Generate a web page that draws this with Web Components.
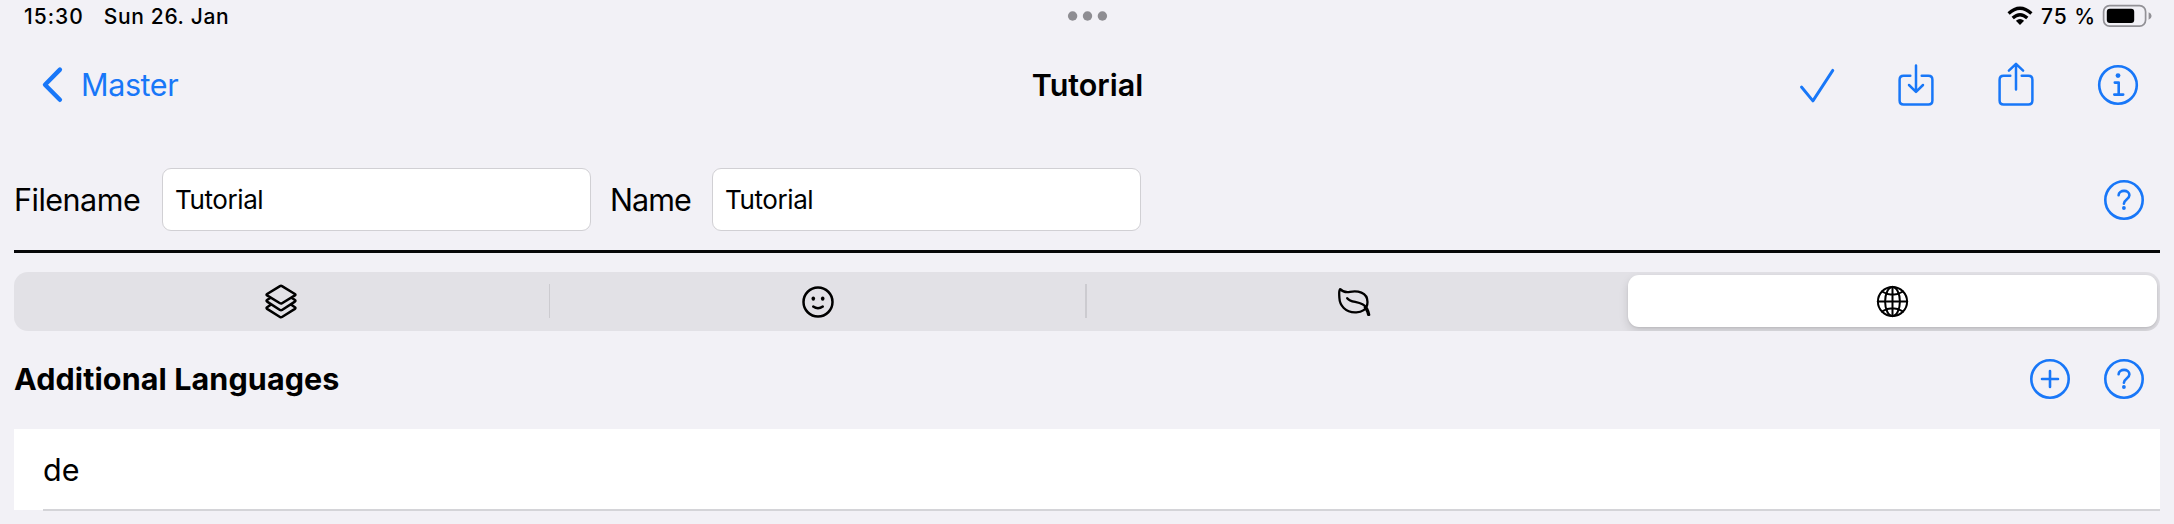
<!DOCTYPE html>
<html lang="en">
<head>
<meta charset="utf-8">
<title>Tutorial</title>
<style>
html,body{margin:0;height:100%}
body{background:#f2f1f6;font-family:Inter,"Liberation Sans",sans-serif;color:#000;overflow:hidden}
</style>
</head>
<body>
<tutorial-page></tutorial-page>
<script>
const define = (name, html) => {
  const t = document.createElement('template');
  t.innerHTML = html;
  customElements.define(name, class extends HTMLElement {
    constructor() {
      super();
      this.attachShadow({mode: 'open'}).append(t.content.cloneNode(true));
    }
  });
};

const stroke = (w, d) => `<g fill="none" stroke="currentColor" stroke-width="${w}" stroke-linecap="round" stroke-linejoin="round">${d}</g>`;
const icons = {
  back: [20, 36, stroke(4.4, '<path d="M18.9 2.6 4 17.8 18.9 32.8"/>')],
  check: [40, 44, stroke(2.9, '<path d="M5.5 24 16.9 37.9 36.8 7.4"/>')],
  download: [40, 44, stroke(2.5, '<path d="M14.3 12.7H7.6Q3.6 12.7 3.6 16.7V37.5Q3.6 41.5 7.6 41.5H32.4Q36.4 41.5 36.4 37.5V16.7Q36.4 12.7 32.4 12.7H25.7M20 2.6V28.6M13 22 20 28.9 27 22"/>')],
  share: [40, 44, stroke(2.5, '<path d="M14.3 12.7H7.6Q3.6 12.7 3.6 16.7V37.5Q3.6 41.5 7.6 41.5H32.4Q36.4 41.5 36.4 37.5V16.7Q36.4 12.7 32.4 12.7H25.7M20 26.6V.9M12.9 7.7 20 .9 27.1 7.7"/>')],
  info: [42, 42, stroke(2.6, '<circle cx="21" cy="21" r="18.8"/><path d="M17.8 18.6H21.7V30.5M17.3 30.6H26.2"/>') + '<circle cx="21" cy="11.6" r="2.4" fill="currentColor"/>'],
  plus: [42, 42, stroke(2.6, '<circle cx="21" cy="21" r="18.7"/><path d="M21 13V29M13 21H29"/>')],
  help: [42, 42, stroke(2.6, '<circle cx="21" cy="21" r="18.7"/><path d="M15.6 16.2C15.8 10.4 26.4 10.4 26.4 16.3 26.4 20.5 20.9 20.6 20.9 24.8"/>') + '<circle cx="20.9" cy="29" r="1.9" fill="currentColor"/>'],
  layers: [36, 36, stroke(2.5, '<path d="M17 2.1Q18 1.5 19 2.1L31.9 10Q33 10.7 31.9 11.4L19 19.3Q18 19.9 17 19.3L4.1 11.4Q3 10.7 4.1 10ZM7 13.9 4.1 16Q3 16.8 4.1 17.6L17 26Q18 26.6 19 26L31.9 17.6Q33 16.8 31.9 16L29 13.9M7 21.3 4.1 23.3Q3 24.1 4.1 24.9L17 33Q18 33.6 19 33L31.9 24.9Q33 24.1 31.9 23.3L29 21.3"/>')],
  smile: [36, 36, stroke(2.5, '<circle cx="18" cy="18" r="14.5"/><path d="M13.2 22.6Q18 26 22.8 22.6"/>') + '<ellipse cx="13.3" cy="14.6" rx="1.8" ry="2.2" fill="currentColor"/><ellipse cx="22.7" cy="14.6" rx="1.8" ry="2.2" fill="currentColor"/>'],
  leaf: [36, 36, stroke(2.3, '<path d="M4.2 5.1C6 7 9.5 8.7 14 7.9 21 6.5 31.5 8 31.5 18 31.5 25.5 25.5 28.9 19 28.4 9.5 28.3 3.7 21.5 3.4 14 3.2 10 2.6 7 4.2 5.1Z"/><path d="M11.2 14.2C14.5 18.5 20.5 17.2 26.5 20.3 30.5 22.4 32.3 26 33.2 30.8L32.2 30.9C31.7 28 30.7 25.8 28.8 23.2"/>')],
  globe: [36, 36, stroke(2, '<circle cx="18.5" cy="18.5" r="14.6"/><ellipse cx="18.5" cy="18.5" rx="7.4" ry="14.6"/><path d="M18.5 3.8V33.2M3.8 18.5H33.2M7.9 8.5Q18.5 15 29.1 8.5M7.9 28.5Q18.5 22 29.1 28.5"/>')],
  wifi: [26, 20, '<g fill="none" stroke="currentColor" stroke-width="3.3"><path d="M1.6 7.5Q13-2.9 24.4 7.5M5.7 12Q13 5.3 20.3 12"/></g><path d="M13 19 8.9 14.7Q13 11.3 17.1 14.7Z" fill="currentColor"/>'],
  battery: [50, 24, '<rect x="1.6" y="1.7" width="42" height="20.4" rx="6" fill="none" stroke="#929196" stroke-width="1.7"/><rect x="4.8" y="4.8" width="27.4" height="14.3" rx="3" fill="currentColor"/><path d="M46.6 8.2Q49.6 9.4 49.6 12 49.6 14.6 46.6 15.8Z" fill="#929196"/>'],
  dots: [40, 10, '<g fill="#8e8d92"><circle cx="4.6" cy="5" r="4.7"/><circle cx="19.5" cy="5" r="4.7"/><circle cx="34.4" cy="5" r="4.7"/></g>']
};
customElements.define('ui-icon', class extends HTMLElement {
  connectedCallback() {
    const [w, h, art] = icons[this.getAttribute('name')];
    const root = this.shadowRoot || this.attachShadow({mode: 'open'});
    root.innerHTML = `<style>:host{display:block;flex:none;width:${w}px;height:${h}px}svg{display:block;overflow:visible}</style><svg width="${w}" height="${h}" viewBox="0 0 ${w} ${h}">${art}</svg>`;
  }
});

define('status-bar', `<style>
:host{display:grid;grid-template-columns:1fr auto 1fr;align-items:center;height:32px;padding:0 22px 0 24px;font-size:21px;font-weight:460;white-space:nowrap}
.l{display:flex;gap:20px}.time{letter-spacing:1px}.date{letter-spacing:.65px}
.r{display:flex;justify-content:flex-end;align-items:center}
.p{margin:0 6px 0 7.5px;letter-spacing:.95px}
</style><div class="l"><span class="time">15:30</span><span class="date">Sun 26. Jan</span></div><ui-icon name="dots"></ui-icon>
<div class="r"><ui-icon name="wifi"></ui-icon><span class="p">75 %</span><ui-icon name="battery"></ui-icon></div>`);

define('nav-bar', `<style>
:host{display:grid;grid-template-columns:1fr auto 1fr;align-items:center;height:106px;padding:0 36px 0 41px;font-size:30.5px;line-height:40px}
.back{display:flex;align-items:center;gap:20px;color:#1877f8;letter-spacing:-.4px}
.title{font-weight:600;margin-right:3px;margin-left:-1px}
.tools{display:flex;justify-content:flex-end;align-items:center;color:#1877f8}
.tools ui-icon{margin-left:60px}.tools ui-icon:last-child{margin-left:61px;margin-right:-1px}
</style><div class="back"><ui-icon name="back"></ui-icon><span>Master</span></div><div class="title"><slot></slot></div>
<div class="tools"><ui-icon name="check"></ui-icon><ui-icon name="download"></ui-icon><ui-icon name="share"></ui-icon><ui-icon name="info"></ui-icon></div>`);

define('text-field', `<style>
:host{display:flex;flex:none;align-items:center;font-size:30.5px}
.label{flex:none;width:var(--label);letter-spacing:var(--track)}
.box{box-sizing:border-box;width:429.5px;height:63px;border:1px solid #d1d0d4;border-radius:9px;background:#fff;display:flex;align-items:center;padding-left:12.5px;font-size:26px;letter-spacing:-.4px}
</style><span class="label"><slot name="label"></slot></span><div class="box"><slot></slot></div>`);

define('file-form', `<style>
:host{display:flex;align-items:center;box-sizing:border-box;height:115px;margin:0 14px;padding-top:10px;border-bottom:3px solid #060708}
.help{margin-left:auto;margin-right:15.5px;margin-top:1px;color:#1877f8}
.file{--label:147.5px;--track:-.5px}
.name{--label:101.5px;--track:-.9px;margin-left:19px}
</style><text-field class="file"><span slot="label">Filename</span>Tutorial</text-field><text-field class="name"><span slot="label">Name</span>Tutorial</text-field><ui-icon class="help" name="help"></ui-icon>`);

define('segment-item', `<style>
:host{position:relative;display:flex;align-items:center;justify-content:center;border-radius:11px;padding-right:2px}
:host([divided])::after{content:"";position:absolute;right:.5px;top:12px;width:1.5px;height:34px;background:#cccbd0}
:host([selected]){background:#fff;margin:3px 3px 4px 4.5px;box-shadow:0 4px 10px rgba(0,0,0,.13),0 1px 2px rgba(0,0,0,.08)}
</style><slot></slot>`);

define('segment-bar', `<style>
:host{display:grid;grid-template-columns:repeat(4,1fr);height:59px;margin:19px 14px 0;border-radius:14px;background:#e2e1e6;overflow:hidden}
</style><segment-item divided><ui-icon name="layers"></ui-icon></segment-item><segment-item divided><ui-icon name="smile"></ui-icon></segment-item><segment-item><ui-icon name="leaf"></ui-icon></segment-item><segment-item selected><ui-icon name="globe"></ui-icon></segment-item>`);

define('section-header', `<style>
:host{display:flex;align-items:center;height:98px;padding:0 29.5px 0 14px;font-size:30.5px;font-weight:700}
.t{letter-spacing:.1px;margin-top:-4px}
.tools{display:flex;gap:32px;margin-left:auto;margin-top:-2px;color:#1877f8}
</style><span class="t"><slot></slot></span><div class="tools"><ui-icon name="plus"></ui-icon><ui-icon name="help"></ui-icon></div>`);

define('language-row', `<style>
:host{display:flex;height:82px;margin:0 14px 0 13.5px;padding-left:29.5px;background:linear-gradient(#fff 0 81px,transparent 81px);font-size:30.5px}
div{flex:1;display:flex;align-items:center;box-sizing:border-box;border-bottom:2px solid #d4d4d8}
</style><div><span><slot></slot></span></div>`);

define('tutorial-page', `<style>:host{display:block}</style>
<status-bar></status-bar><nav-bar>Tutorial</nav-bar><file-form></file-form><segment-bar></segment-bar>
<section-header>Additional Languages</section-header><language-row>de</language-row>`);
</script>
</body>
</html>
